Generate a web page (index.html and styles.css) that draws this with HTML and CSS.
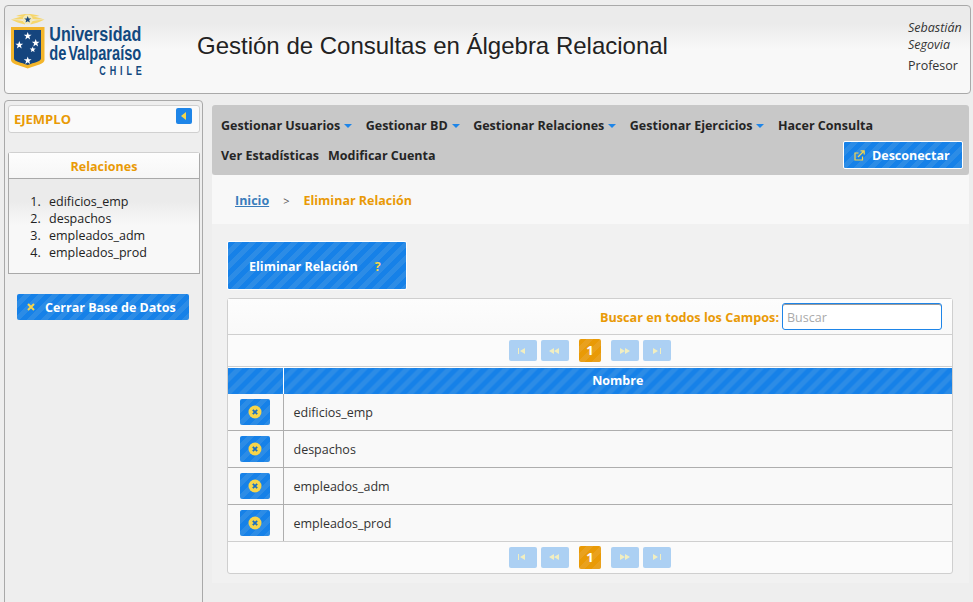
FILE: index.html
```html
<!DOCTYPE html>
<html lang="es">
<head>
<meta charset="utf-8">
<title>Gestión de Consultas en Álgebra Relacional</title>
<link rel="stylesheet" href="styles.css">
</head>
<body>
<header class="top">
  <svg class="logo" width="134" height="66" viewBox="0 0 134 66">
    <g fill="#f6d66b">
      <path d="M0 5.500 C6 3.500 10 2.500 14 2 L15 5 C10 5.500 5 5.500 0 5.500Z"/>
      <path d="M0 5.500 C5 6 10 6.500 14 7.500 L14 10.500 C9 9.500 4 7.500 0 5.500Z"/>
      <path d="M33.500 5.500 C27.500 3.500 23.500 2.500 19.500 2 L18.500 5 C23.500 5.500 28.500 5.500 33.500 5.500Z"/>
      <path d="M33.500 5.500 C28.500 6 23.500 6.500 19.500 7.500 L19.500 10.500 C24.500 9.500 29.500 7.500 33.500 5.500Z"/>
      <path d="M5 2 C9 .5 13 0 16.500 0 C20.500 0 24.500 .5 28.500 2 L20 3 H13Z"/>
    </g>
    <circle cx="16.700" cy="5.500" r="5" fill="#f3e9b8"/>
    <path d="M16.700 2l1 2.400 2.500.1-2 1.600.7 2.500-2.200-1.400-2.200 1.400.7-2.500-2-1.600 2.500-.1z" fill="#17477e"/>
    <path d="M0 13H33.500V46C33.500 50 26 51 16.700 54.500C7.500 51 0 50 0 46Z" fill="#f3b52a"/>
    <path d="M3 16H30V44.500C30 47.500 23 48.500 16.700 51C10.500 48.500 3 47.500 3 44.500Z" fill="#15457e"/>
    <g fill="#fff">
      <path d="M16.700 18l1 2.700 2.900.1-2.300 1.800.8 2.800-2.400-1.600-2.400 1.600.8-2.800-2.300-1.800 2.900-.1z"/>
      <path d="M8.300 27l1 2.700 2.900.1-2.300 1.800.8 2.800-2.400-1.600-2.400 1.600.8-2.800-2.300-1.800 2.900-.1z"/>
      <path d="M24.700 25l1 2.700 2.900.1-2.300 1.800.8 2.800-2.400-1.600-2.400 1.600.8-2.800-2.300-1.800 2.900-.1z"/>
      <path d="M21.700 32.500l.8 2 2.200.1-1.700 1.400.6 2.100-1.900-1.200-1.900 1.200.6-2.100-1.700-1.400 2.200-.1z"/>
      <path d="M16.700 42.500l1 2.700 2.900.1-2.300 1.800.8 2.800-2.400-1.600-2.400 1.600.8-2.800-2.300-1.800 2.900-.1z"/>
    </g>
    <g class="logo-text">
      <text x="38.300" y="27.300" textLength="92" lengthAdjust="spacingAndGlyphs">Universidad</text>
      <text class="logo-second" x="38.300" y="46.300" textLength="92" lengthAdjust="spacingAndGlyphs">de Valparaíso</text>
      <text class="logo-chile" transform="translate(88.300 60.700) scale(.72 1)" textLength="59">CHILE</text>
    </g>
  </svg>
  <h1 class="app-title">Gestión de Consultas en Álgebra Relacional</h1>
  <div class="user">
    <em>Sebastián<br>Segovia</em>
    <span class="role">Profesor</span>
  </div>
</header>

<div class="layout">
  <aside class="side">
    <div class="side-head">
      <span>EJEMPLO</span>
      <span class="collapse"><svg width="6" height="8" viewBox="0 0 6 8"><path d="M5 0V8L0 4Z" fill="#f7d54a"/></svg></span>
    </div>
    <section class="rel">
      <h2>Relaciones</h2>
      <ol>
        <li>edificios_emp</li>
        <li>despachos</li>
        <li>empleados_adm</li>
        <li>empleados_prod</li>
      </ol>
    </section>
    <a class="close-db stripes">
      <svg class="x" width="8" height="8" viewBox="0 0 8 8"><path d="M1 1L7 7M7 1L1 7" stroke="#f7d54a" stroke-width="2"/></svg>
      Cerrar Base de Datos
    </a>
  </aside>

  <main class="main">
    <nav class="menu">
      <div class="menu-row">
        <a>Gestionar Usuarios<i class="caret"></i></a>
        <a>Gestionar BD<i class="caret"></i></a>
        <a>Gestionar Relaciones<i class="caret"></i></a>
        <a>Gestionar Ejercicios<i class="caret"></i></a>
        <a>Hacer Consulta</a>
      </div>
      <div class="menu-row second">
        <a>Ver Estadísticas</a>
        <a>Modificar Cuenta</a>
        <a class="logout stripes">
          <svg width="11" height="11" viewBox="0 0 11 11" fill="none" stroke="#f7d54a" stroke-width="1.200"><path d="M8.500 6.500V10H1V3H4.500"/><path d="M4 7L10 1M6.500 .8H10.200V4.500"/></svg>
          Desconectar
        </a>
      </div>
    </nav>
    <div class="crumbs">
      <a class="home">Inicio</a>
      <span class="sep">&gt;</span>
      <span class="current">Eliminar Relación</span>
    </div>
    <div class="content">
      <div class="page-title stripes">Eliminar Relación <span class="help">?</span></div>
      <div class="grid">
        <div class="search">
          <label for="q">Buscar en todos los Campos:</label>
          <input id="q" placeholder="Buscar">
        </div>
        <div class="pager">
          <span class="pg"><svg width="12" height="6" viewBox="0 0 12 6"><path d="M1 0H2V6H1ZM3 3L8 0V6Z"/></svg></span>
          <span class="pg"><svg width="12" height="6" viewBox="0 0 12 6"><path d="M0 3L5 0V6ZM5 3L10 0V6Z"/></svg></span>
          <span class="num stripes-o">1</span>
          <span class="pg"><svg width="12" height="6" viewBox="0 0 12 6"><path d="M1 0L6 3L1 6ZM6 0L11 3L6 6Z"/></svg></span>
          <span class="pg"><svg width="12" height="6" viewBox="0 0 12 6"><path d="M2 0L7 3L2 6ZM9 0H10V6H9Z"/></svg></span>
        </div>
        <table>
          <thead>
            <tr><th class="c1 stripes"></th><th class="stripes">Nombre</th></tr>
          </thead>
          <tbody>
            <tr><td class="c1"><span class="del stripes"><svg width="14" height="14" viewBox="0 0 14 14"><circle cx="7" cy="7" r="6.500" fill="#f7d54a"/><path d="M4.800 4.800L9.200 9.200M9.200 4.800L4.800 9.200" stroke="#1c6fc0" stroke-width="1.800"/></svg></span></td><td>edificios_emp</td></tr>
            <tr><td class="c1"><span class="del stripes"><svg width="14" height="14" viewBox="0 0 14 14"><circle cx="7" cy="7" r="6.500" fill="#f7d54a"/><path d="M4.800 4.800L9.200 9.200M9.200 4.800L4.800 9.200" stroke="#1c6fc0" stroke-width="1.800"/></svg></span></td><td>despachos</td></tr>
            <tr><td class="c1"><span class="del stripes"><svg width="14" height="14" viewBox="0 0 14 14"><circle cx="7" cy="7" r="6.500" fill="#f7d54a"/><path d="M4.800 4.800L9.200 9.200M9.200 4.800L4.800 9.200" stroke="#1c6fc0" stroke-width="1.800"/></svg></span></td><td>empleados_adm</td></tr>
            <tr><td class="c1"><span class="del stripes"><svg width="14" height="14" viewBox="0 0 14 14"><circle cx="7" cy="7" r="6.500" fill="#f7d54a"/><path d="M4.800 4.800L9.200 9.200M9.200 4.800L4.800 9.200" stroke="#1c6fc0" stroke-width="1.800"/></svg></span></td><td>empleados_prod</td></tr>
          </tbody>
        </table>
        <div class="pager bottom">
          <span class="pg"><svg width="12" height="6" viewBox="0 0 12 6"><path d="M1 0H2V6H1ZM3 3L8 0V6Z"/></svg></span>
          <span class="pg"><svg width="12" height="6" viewBox="0 0 12 6"><path d="M0 3L5 0V6ZM5 3L10 0V6Z"/></svg></span>
          <span class="num stripes-o">1</span>
          <span class="pg"><svg width="12" height="6" viewBox="0 0 12 6"><path d="M1 0L6 3L1 6ZM6 0L11 3L6 6Z"/></svg></span>
          <span class="pg"><svg width="12" height="6" viewBox="0 0 12 6"><path d="M2 0L7 3L2 6ZM9 0H10V6H9Z"/></svg></span>
        </div>
      </div>
    </div>
  </main>
</div>
</body>
</html>
```
FILE: styles.css
```css
* { box-sizing: border-box; }
html, body { margin: 0; height: 602px; overflow: hidden; }
body {
  background: #eeeeee;
  padding: 5px 2px 0 4px;
  font-family: "Open Sans", "Noto Sans", sans-serif;
  font-size: 12.5px;
  color: #222;
}
.stripes {
  background: repeating-linear-gradient(135deg, #1681e8 0 5px, #2c8ce6 5px 10px);
  color: #fff;
}
.stripes-o {
  background: repeating-linear-gradient(135deg, #e99a06 0 5px, #e9a11e 5px 10px);
  color: #fff;
}
.top {
  display: flex;
  align-items: flex-start;
  height: 89px;
  border: 1px solid #a9a9a9;
  border-radius: 4px;
  background: linear-gradient(#ebebeb 0, #ebebeb 20%, #f8f8f8 50%, #f8f8f8 100%);
}
.logo { margin: 8px 0 0 6px; flex: none; overflow: visible; }
.logo-text text { font: 700 19.500px "Liberation Sans", sans-serif; fill: #12497f; }
.logo-text .logo-second { word-spacing: -3px; }
.logo-text .logo-chile { font-size: 12.500px; }
.app-title {
  margin: 26px 0 0 52px;
  font: 400 24px/28px "Liberation Sans", Arial, sans-serif;
  color: #222;
  flex: 1;
}
.user {
  width: 62px;
  margin-top: 13px;
  font-size: 12.500px;
  line-height: 17px;
  color: #333;
}
.user em { display: block; }
.role { display: block; margin-top: 4px; }
.layout { display: flex; margin-top: 6px; }
.side {
  width: 199px;
  height: 520px;
  flex: none;
  border: 1px solid #a9a9a9;
  border-radius: 4px 4px 0 0;
  padding: 4px 2px 0 3px;
  background: #eeeeee;
}
.side-head {
  display: flex;
  justify-content: space-between;
  height: 28px;
  padding: 0 7px 0 5px;
  border: 1px solid #d0d0d0;
  border-radius: 3px;
  background: #fafafa;
  font-weight: 700;
  font-size: 13px;
  line-height: 26px;
  color: #e99a06;
}
.collapse {
  display: flex;
  align-items: center;
  justify-content: center;
  width: 16px;
  height: 16px;
  margin-top: 2px;
  border-radius: 2px;
  background: #1e85e8;
}
.rel {
  margin-top: 19px;
  border: 1px solid #a9a9a9;
  border-top-color: #d0d0d0;
  border-radius: 3px 3px 0 0;
  background: linear-gradient(#ebebeb 0, #ebebeb 40%, #f8f8f8 60%);
}
.rel h2 {
  margin: 0;
  height: 26px;
  padding-top: 1px;
  border-bottom: 1px solid #a9a9a9;
  background: linear-gradient(#fdfdfd, #f6f6f6);
  font-size: 12.500px;
  font-weight: 700;
  line-height: 26px;
  text-align: center;
  color: #e99a06;
}
.rel ol {
  margin: 0;
  padding: 14px 0 12px 35px;
  font-size: 12.500px;
  line-height: 17px;
}
.rel li { padding-left: 5px; }
.close-db {
  display: flex;
  align-items: center;
  width: 172px;
  height: 26px;
  margin: 20px 0 0 9px;
  padding-left: 10px;
  border-radius: 2px;
  font-weight: 700;
  font-size: 12.500px;
}
.x { margin-right: 10px; }
.main {
  width: 757px;
  margin: 5px 0 0 9px;
  height: 478px;
  background: #f1f1f1;
}
.menu {
  height: 70px;
  padding: 5px 0 0 9px;
  background: #c8c8c8;
  border-radius: 3px;
}
.menu-row { display: flex; gap: 13.500px; height: 30px; align-items: center; font-weight: 700; font-size: 12.500px; color: #252525; }
.menu-row a { white-space: nowrap; }
.second { gap: 9px; }
.caret {
  display: inline-block;
  margin-left: 4px;
  vertical-align: 2px;
  border: 4px solid transparent;
  border-top: 4px solid #1e85e8;
  border-bottom: 0;
}
.logout {
  display: flex;
  align-items: center;
  gap: 7px;
  width: 120px;
  height: 28px;
  margin-left: auto;
  margin-right: 6px;
  padding-left: 10px;
  border: 1px solid #fff;
  border-radius: 2px;
  color: #fff;
}
.crumbs {
  display: flex;
  align-items: center;
  height: 49px;
  padding: 2px 0 0 23px;
  background: #f8f8f8;
  font-weight: 700;
  font-size: 12.500px;
}
.home { color: #3a7dbb; text-decoration: underline; }
.sep { margin: 0 14px; font-weight: 400; color: #555; font-size: 11px; }
.current { color: #e99a06; }
.content { padding: 17px 0 0 15px; }
.page-title {
  width: 180px;
  height: 49px;
  padding-left: 21px;
  border: 1px solid #fff;
  border-radius: 2px;
  font-weight: 700;
  font-size: 12.500px;
  line-height: 49px;
  white-space: nowrap;
}
.help { color: #f7d54a; margin-left: 14px; }
.grid {
  margin-top: 8px;
  border: 1px solid #cfcfcf;
  border-radius: 3px;
  background: #fbfbfb;
  width: 726px;
}
.search {
  display: flex;
  align-items: center;
  justify-content: flex-end;
  gap: 3px;
  height: 36px;
  padding-right: 10px;
  border-bottom: 1px solid #cfcfcf;
  background: linear-gradient(#fdfdfd, #f9f9f9);
}
.search label { padding-top: 1px; color: #e99a06; font-weight: 700; font-size: 12.650px; }
.search input {
  width: 160px;
  height: 27px;
  padding: 2px 4px 0;
  border: 1px solid #1e85e8;
  border-radius: 3px;
  box-shadow: inset 0 1px 0 #9a9a9a;
  background: #fff;
  font: 12.500px "Open Sans", sans-serif;
}
.search input::placeholder { color: #aaa; opacity: 1; }
.pager {
  display: flex;
  align-items: center;
  justify-content: center;
  height: 32px;
  gap: 4px;
  border-bottom: 1px solid #cfcfcf;
}
.bottom { border-top: 1px solid #cfcfcf; border-bottom: 0; }
.pg {
  display: flex;
  align-items: center;
  justify-content: center;
  width: 28px;
  height: 21px;
  border-radius: 2px;
  background: #acd0f3;
}
.pg svg { fill: #f1eec0; }
.num {
  width: 22px;
  height: 23px;
  margin: 0 6px;
  border-radius: 2px;
  text-align: center;
  font-weight: 700;
  font-size: 13px;
  line-height: 23px;
}
table { width: 100%; border-collapse: collapse; table-layout: fixed; }
th {
  height: 26px;
  padding: 0;
  border-left: 1px solid #fff;
  border-top: 1px solid #fff;
  font-size: 12.500px;
  font-weight: 700;
}
th.c1 { border-left: 0; }
.c1 { width: 55px; text-align: center; }
td {
  height: 37px;
  padding: 0 0 0 10px;
  border-bottom: 1px solid #aeaeae;
  background: #f9f9f9;
  font-size: 12.500px;
  color: #333;
}
tbody tr:first-child td { padding-top: 1px; }
tr:last-child td { border-bottom: 0; height: 36px; padding-top: 1px; }
td.c1 { padding: 0; border-right: 1px solid #aeaeae; }
.del {
  display: inline-flex;
  align-items: center;
  justify-content: center;
  width: 30px;
  height: 26px;
  vertical-align: middle;
  border-radius: 2px;
}
```
